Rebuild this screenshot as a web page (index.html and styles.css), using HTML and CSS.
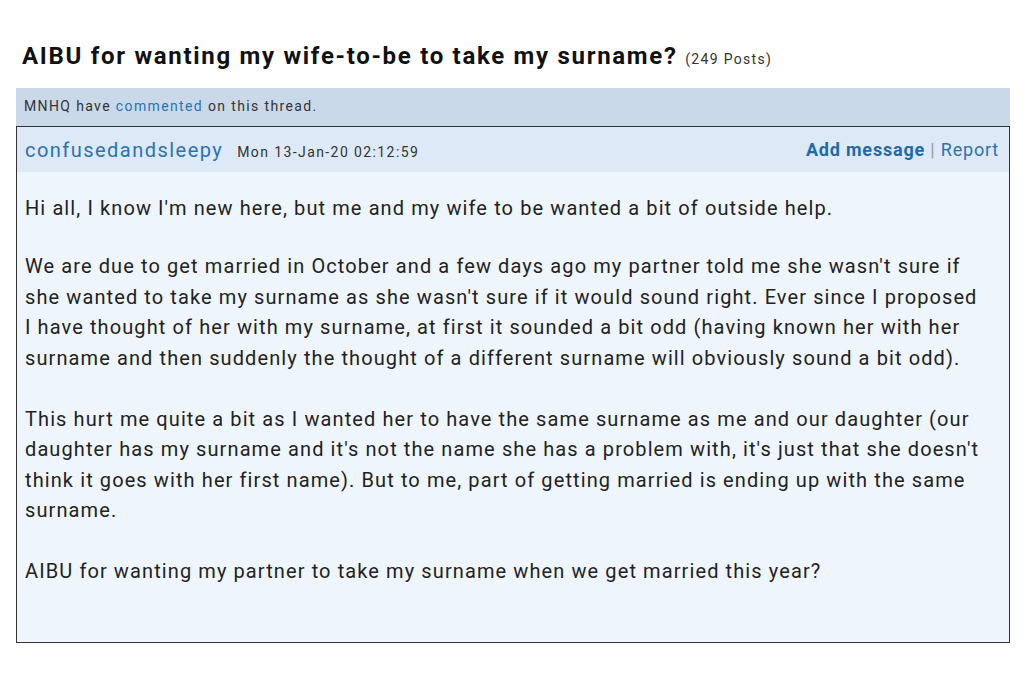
FILE: index.html
```html
<!DOCTYPE html>
<html>
<head>
<meta charset="utf-8">
<link rel="stylesheet" href="styles.css">
</head>
<body>
<div class="page">
  <h1 class="title">AIBU for wanting my wife-to-be to take my surname? <span class="count">(249 Posts)</span></h1>
  <div class="notice">MNHQ have <a class="link">commented</a> on this thread.</div>
  <div class="post">
    <div class="post-head">
      <div class="who">
        <span class="user">confusedandsleepy</span>
        <span class="date">Mon 13-Jan-20 02:12:59</span>
      </div>
      <div class="actions"><span class="add">Add message</span> <span class="sep">|</span> <span class="report">Report</span></div>
    </div>
    <div class="post-body">
      <p>Hi all, I know I'm new here, but me and my wife to be wanted a bit of outside help.</p>
      <p>We are due to get married in October and a few days ago my partner told me she wasn't sure if she wanted to take my surname as she wasn't sure if it would sound right. Ever since I proposed I have thought of her with my surname, at first it sounded a bit odd (having known her with her surname and then suddenly the thought of a different surname will obviously sound a bit odd).</p>
      <p>This hurt me quite a bit as I wanted her to have the same surname as me and our daughter (our daughter has my surname and it's not the name she has a problem with, it's just that she doesn't think it goes with her first name). But to me, part of getting married is ending up with the same surname.</p>
      <p>AIBU for wanting my partner to take my surname when we get married this year?</p>
    </div>
  </div>
</div>
</body>
</html>
```

FILE: styles.css
```css
html, body {
  margin: 0;
  padding: 0;
  background: #ffffff;
}
body {
  font-family: Roboto, "Liberation Sans", Arial, sans-serif;
  color: #222;
}
.page {
  padding: 40px 14px 0 16px;
  width: 994px;
}
.title {
  margin: 0 0 16px 6px;
  font-size: 24px;
  font-weight: 700;
  color: #111;
  line-height: 32px;
  letter-spacing: 1.7px;
}
.count {
  font-size: 14px;
  font-weight: 400;
  color: #333;
  letter-spacing: 1.3px;
  line-height: 1;
}
.notice {
  background: #c9d9ea;
  height: 38px;
  line-height: 36px;
  padding-left: 8px;
  font-size: 14px;
  color: #333;
  letter-spacing: 1.37px;
}
.link {
  color: #2a73b0;
}
.post {
  border: 1.5px solid #333;
  background: #eef5fd;
  height: 515px;
}
.post-head {
  background: #dde9f7;
  height: 45px;
  display: flex;
  justify-content: space-between;
  align-items: center;
  padding: 0 10px 0 8px;
}
.user {
  font-size: 20px;
  color: #2a73b0;
  letter-spacing: 1.47px;
}
.date {
  font-size: 14px;
  color: #333;
  margin-left: 10px;
  letter-spacing: 1.4px;
}
.actions {
  font-size: 18px;
  color: #2a73b0;
  letter-spacing: 0.8px;
}
.add {
  font-weight: 700;
  color: #1f6aa6;
}
.sep {
  color: #999;
}
.post-body {
  padding: 21px 24px 0 8px;
  font-size: 20px;
  line-height: 30.5px;
  color: #222;
  letter-spacing: 1.1px;
}
.post-body p {
  margin: 0 0 30.5px 0;
}
.post-body p:first-child {
  margin-bottom: 27.5px;
}
```
